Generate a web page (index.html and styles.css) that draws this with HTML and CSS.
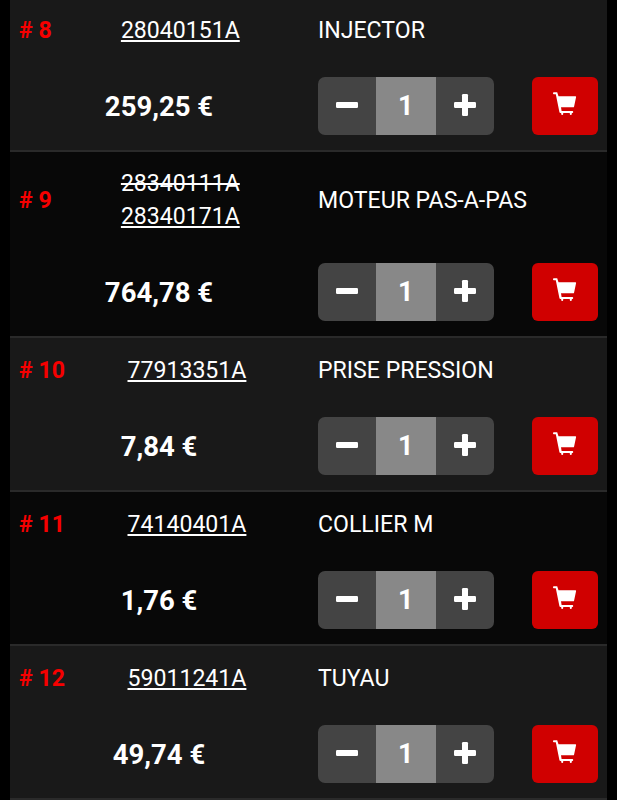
FILE: index.html
```html
<!DOCTYPE html>
<html lang="fr">
<head>
<meta charset="utf-8">
<title>Pièces</title>
<link rel="stylesheet" href="styles.css">
</head>
<body>
<svg width="0" height="0" class="defs">
  <symbol id="minus" viewBox="0 0 22 22"><rect x="0" y="8" width="22" height="6" rx="1.2"/></symbol>
  <symbol id="plus" viewBox="0 0 22 22"><rect x="0" y="8" width="22" height="6" rx="1.2"/><rect x="8" y="0" width="6" height="22" rx="1.2"/></symbol>
  <symbol id="cart" viewBox="0 0 24 24"><path d="M.8.200h3.400l1.300 4h17q.7 0 .6.700l-2 9.500q-.1.900-1 .900H8l.6 3.800h10.800q.8 0 .8 1t-.8 1H18.800v.9q0 1-1 1t-1-1v-.9H10.200v.9q0 1-1 1t-1-1v-.9H7.400q-.8-.2-1-1L2.800 2.200H.8Q0 2 0 1.200T.8.200z"/></symbol>
</svg>
<main class="parts">
  <article class="part">
    <div class="ident"><strong class="num"># 8</strong><div class="codes"><a class="code">28040151A</a></div></div>
    <div class="name">INJECTOR</div>
    <div class="price">259,25 €</div>
    <div class="actions"><div class="stepper"><button><svg><use href="#minus"/></svg></button><span class="qty">1</span><button><svg><use href="#plus"/></svg></button></div><button class="buy"><svg><use href="#cart"/></svg></button></div>
  </article>
  <article class="part">
    <div class="ident"><strong class="num"># 9</strong><div class="codes"><s class="old">28340111A</s><a class="code">28340171A</a></div></div>
    <div class="name">MOTEUR PAS-A-PAS</div>
    <div class="price">764,78 €</div>
    <div class="actions"><div class="stepper"><button><svg><use href="#minus"/></svg></button><span class="qty">1</span><button><svg><use href="#plus"/></svg></button></div><button class="buy"><svg><use href="#cart"/></svg></button></div>
  </article>
  <article class="part">
    <div class="ident"><strong class="num"># 10</strong><div class="codes"><a class="code">77913351A</a></div></div>
    <div class="name">PRISE PRESSION</div>
    <div class="price">7,84 €</div>
    <div class="actions"><div class="stepper"><button><svg><use href="#minus"/></svg></button><span class="qty">1</span><button><svg><use href="#plus"/></svg></button></div><button class="buy"><svg><use href="#cart"/></svg></button></div>
  </article>
  <article class="part">
    <div class="ident"><strong class="num"># 11</strong><div class="codes"><a class="code">74140401A</a></div></div>
    <div class="name">COLLIER M</div>
    <div class="price">1,76 €</div>
    <div class="actions"><div class="stepper"><button><svg><use href="#minus"/></svg></button><span class="qty">1</span><button><svg><use href="#plus"/></svg></button></div><button class="buy"><svg><use href="#cart"/></svg></button></div>
  </article>
  <article class="part">
    <div class="ident"><strong class="num"># 12</strong><div class="codes"><a class="code">59011241A</a></div></div>
    <div class="name">TUYAU</div>
    <div class="price">49,74 €</div>
    <div class="actions"><div class="stepper"><button><svg><use href="#minus"/></svg></button><span class="qty">1</span><button><svg><use href="#plus"/></svg></button></div><button class="buy"><svg><use href="#cart"/></svg></button></div>
  </article>
</main>
</body>
</html>
```
FILE: styles.css
```css
* { box-sizing: border-box; }
body {
  margin: 0;
  height: 800px;
  overflow: hidden;
  background: #000;
  color: #fff;
  font: 23.1px/32.6px Roboto, sans-serif;
}
.defs { display: block; }
.parts { margin: -2px 10px 0; }
.part {
  display: grid;
  grid-template-columns: 298px 1fr;
  grid-template-rows: 1fr 89px;
  height: 154px;
  border-bottom: 2px solid #2a2a2a;
  background: #191919;
}
.part:nth-child(even) { background: #080808; }
.part:nth-child(2) { height: 186px; }
.ident { display: flex; align-items: center; padding: 3px 0 0 9px; }
.num { color: #f60000; font-weight: 700; }
.codes { flex: 1; display: flex; flex-direction: column; align-items: center; padding-left: 1px; }
.code { text-decoration: underline; text-decoration-thickness: 2px; text-underline-offset: 2px; }
.old { text-decoration-thickness: 2px; }
.name { align-self: center; padding: 3px 0 0 10px; }
.price {
  padding-top: 17px;
  line-height: 58px;
  font-size: 27.5px;
  font-weight: 700;
  text-align: center;
}
.actions {
  display: flex;
  justify-content: space-between;
  align-items: flex-start;
  padding: 16px 9.5px 0 10px;
}
button {
  display: flex;
  align-items: center;
  justify-content: center;
  margin: 0;
  padding: 0 0 3px;
  border: 0;
  background: #444;
  fill: #fff;
}
.stepper { display: flex; width: 175.5px; height: 58px; border-radius: 7px; overflow: hidden; }
.stepper button { flex: 1; }
.stepper svg { width: 22px; height: 22px; }
.qty {
  width: 59.5px;
  background: #888;
  font-size: 27px;
  font-weight: 700;
  line-height: 58px;
  text-align: center;
}
.buy { width: 66px; height: 57.5px; border-radius: 6px; background: #d00000; }
.buy svg { width: 24px; height: 24px; }
```
